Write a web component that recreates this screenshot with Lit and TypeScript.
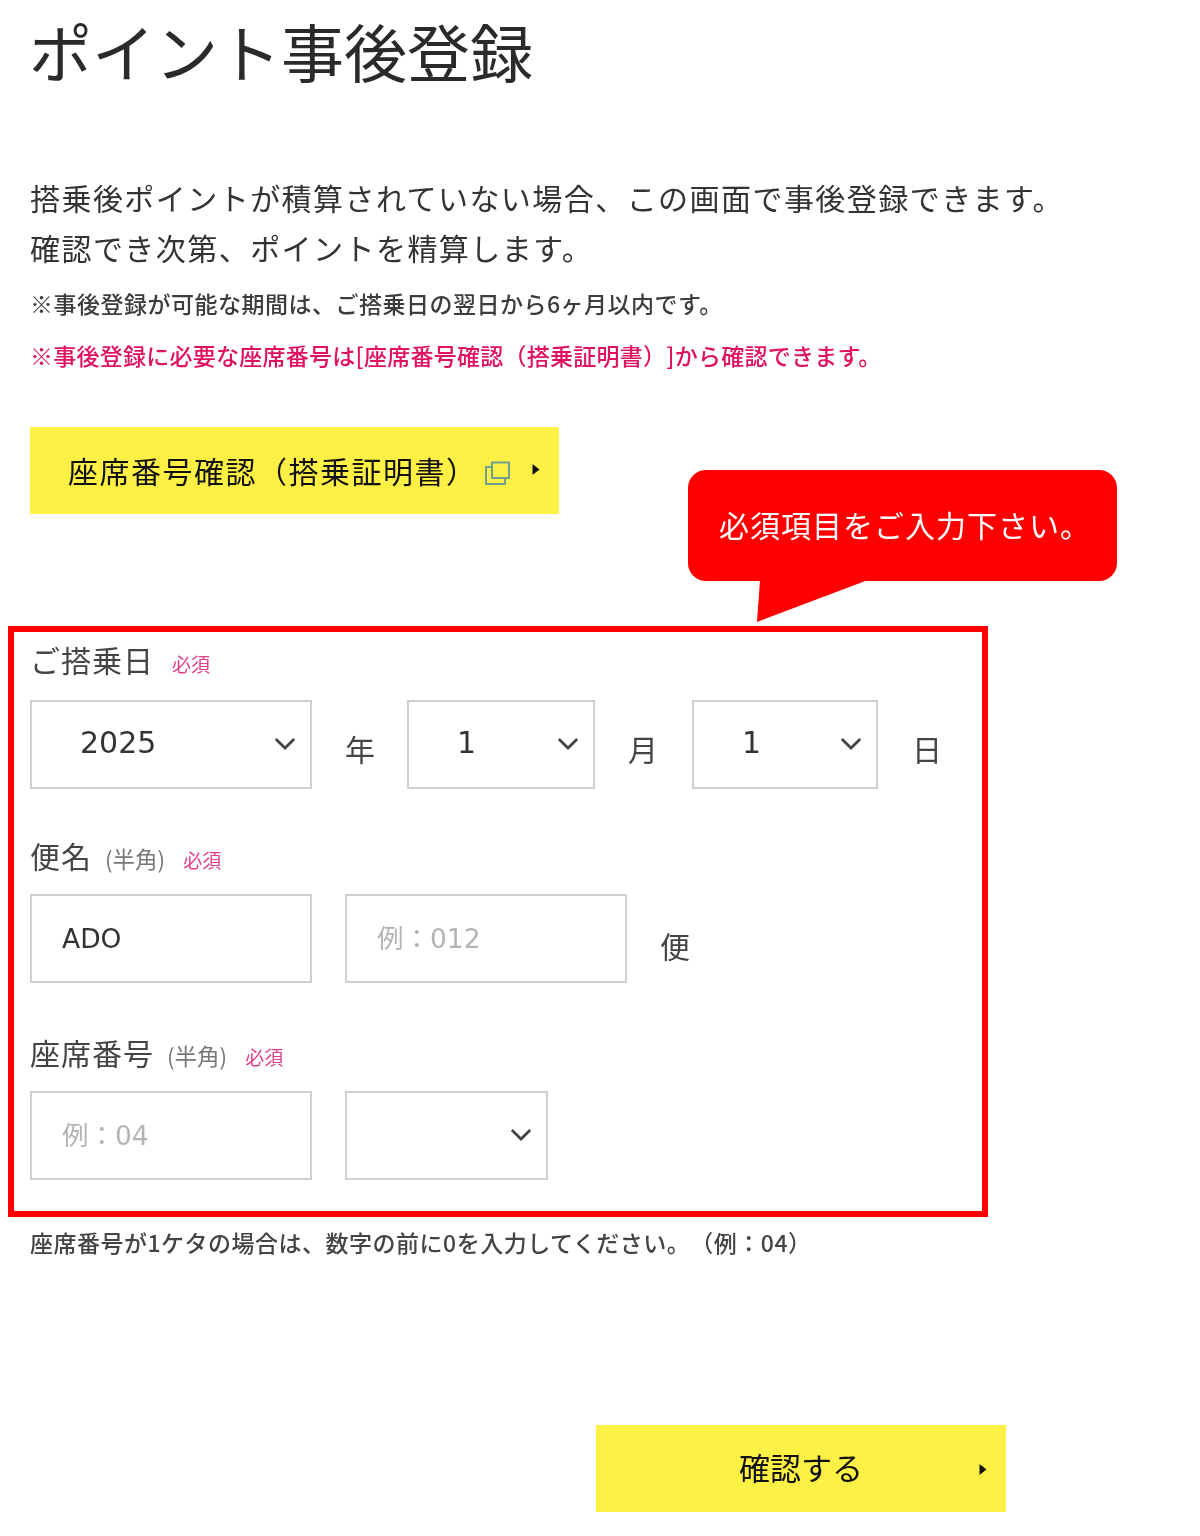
import { LitElement, html, css } from "lit";
import { customElement } from "lit/decorators.js";

const chevron = html`<svg class="chev" viewBox="0 0 24 14" aria-hidden="true"><path d="M2 2 L12 12 L22 2" fill="none" stroke="#444" stroke-width="3"/></svg>`;
const arrow = html`<svg class="arrow" viewBox="0 0 8 12" aria-hidden="true"><path d="M0.5 0.5 L7.5 6 L0.5 11.5 Z" fill="#111"/></svg>`;

@customElement("app-root")
export class AppRoot extends LitElement {
  static styles = css`
    :host {
      display: block;
      width: 1200px;
      height: 1536px;
      overflow: hidden;
      position: relative;
      background: #fff;
      color: #333;
      font-family: "Noto Sans CJK JP", "Liberation Sans", sans-serif;
      filter: blur(0.55px);
      box-sizing: border-box;
      padding-left: 30px;
      text-spacing-trim: space-all;
    }
    * { box-sizing: border-box; }
    h1 {
      margin: 0 0 0 -1px;
      padding: 0;
      height: 108px;
      font-size: 63px;
      line-height: 100px;
      font-weight: 400;
      color: #2a2a2a;
      white-space: nowrap;
    }
    .intro {
      margin: 64px 0 0;
      font-size: 30px;
      letter-spacing: 1.45px;
      line-height: 50px;
      white-space: nowrap;
      color: #333;
    }
    .note {
      margin: 0;
      font-size: 23px;
      font-weight: 500;
      letter-spacing: 0.5px;
      line-height: 52px;
      white-space: nowrap;
      color: #3c3c3c;
    }
    .first-note { margin-top: 5px; }
    .pink { color: #e0115f; letter-spacing: 0.25px; }
    .btn {
      display: flex;
      align-items: center;
      background: #fff045;
      color: #111;
      font-size: 30px;
      font-weight: 400;
      white-space: nowrap;
      position: relative;
    }
    .btn-label { padding-bottom: 2px; }
    .btn-seat {
      width: 529px;
      height: 87px;
      margin-top: 46px;
      padding-left: 38px;
      letter-spacing: 1.5px;
    }
    .copy { width: 27px; height: 26px; margin-left: 6px; margin-top: 4px; flex: none; }
    .arrow { width: 8px; height: 13px; flex: none; }
    .btn-seat .arrow { margin-left: 21px; margin-top: -3px; }
    .bubble {
      position: absolute;
      left: 688px;
      top: 470px;
      width: 429px;
      height: 111px;
      padding: 0 0 4px 31px;
      display: flex;
      align-items: center;
      background: #ff0000;
      border-radius: 18px;
      color: #fff;
      font-size: 30px;
      font-weight: 400;
      letter-spacing: 1px;
      white-space: nowrap;
    }
    .tail {
      position: absolute;
      left: 68px;
      top: 110px;
      width: 112px;
      height: 42px;
    }
    .form {
      width: 980px;
      height: 591px;
      margin: 112px 0 0 -22px;
      padding: 0 0 0 16px;
      border: 6px solid #ff0000;
      display: flex;
      flex-direction: column;
    }
    .label {
      display: flex;
      align-items: baseline;
      white-space: nowrap;
      font-size: 30px;
      letter-spacing: 1px;
      line-height: 44px;
      color: #444;
    }
    .sub { font-size: 22.5px; line-height: 1; letter-spacing: 0; color: #777; margin-left: 13px; }
    .req { font-size: 19px; line-height: 1; letter-spacing: 0; color: #e0408a; margin-left: 18px; }
    .row {
      display: flex;
      align-items: flex-start;
      height: 89px;
      margin-top: 17px;
    }
    .row-first { margin-top: 19px; }
    .field {
      position: relative;
      height: 89px;
      flex: none;
    }
    select, input {
      display: block;
      width: 100%;
      height: 100%;
      margin: 0;
      border: 2px solid #cfcfcf;
      border-radius: 0;
      background: #fff;
      color: #333;
      font-family: "DejaVu Sans", "Noto Sans CJK JP", sans-serif;
      outline: none;
      appearance: none;
      -webkit-appearance: none;
    }
    input { padding: 0 0 0 30px; font-size: 26.5px; }
    input::placeholder { color: #b4b4b4; opacity: 1; }
    select { padding: 0 0 4px 48px; font-size: 30px; }
    .chev {
      position: absolute;
      right: 16px;
      top: 37px;
      width: 22px;
      height: 13px;
      pointer-events: none;
    }
    .w282 { width: 282px; }
    .w188 { width: 188px; }
    .w186 { width: 186px; }
    .w203 { width: 203px; }
    .unit {
      font-size: 30px;
      line-height: 89px;
      color: #444;
      margin-top: 4px;
      flex: none;
      width: 30px;
    }
    .date-y { margin-left: 33px; margin-right: 32px; }
    .date-m { margin-left: 33px; margin-right: 34px; }
    .date-d { margin-left: 34px; }
    .gap { margin-left: 33px; }
    .unit.gap { margin-top: 7px; }
    .hint {
      margin: 3px 0 0;
      font-size: 23px;
      font-weight: 500;
      letter-spacing: 0.5px;
      line-height: 44px;
      color: #444;
      white-space: nowrap;
    }
    .lab1 { margin-top: 5px; }
    .lab2 { margin-top: 44px; }
    .lab3 { margin-top: 47px; }
    .btn-ok {
      width: 410px;
      height: 87px;
      margin: 161px 0 0 566px;
      justify-content: center;
      font-size: 31px;
    }
    .btn-ok .btn-label { padding-bottom: 5px; }
    .btn-ok .arrow { position: absolute; right: 19px; top: 38px; }
  `;

  render() {
    return html`
      <h1>ポイント事後登録</h1>
      <p class="intro">搭乗後ポイントが積算されていない場合、この画面で事後登録できます。<br />確認でき次第、ポイントを精算します。</p>
      <p class="note first-note">※事後登録が可能な期間は、ご搭乗日の翌日から6ヶ月以内です。</p>
      <p class="note pink">※事後登録に必要な座席番号は[座席番号確認（搭乗証明書）]から確認できます。</p>

      <div class="btn btn-seat">
        <span class="btn-label">座席番号確認（搭乗証明書）</span>
        <svg class="copy" viewBox="0 0 27 26" aria-hidden="true">
          <path d="M8 2.5 H25 V18 H8 Z" fill="none" stroke="#6f9f8f" stroke-width="2"/>
          <path d="M8 7 H2 V24 H21 V18" fill="none" stroke="#6f9f8f" stroke-width="2"/>
        </svg>
        ${arrow}
      </div>

      <div class="bubble">
        必須項目をご入力下さい。
        <svg class="tail" viewBox="0 0 112 42" aria-hidden="true"><path d="M4 0 L1 42 L112 0 Z" fill="#ff0000"/></svg>
      </div>

      <div class="form">
        <div class="label lab1">ご搭乗日<span class="req">必須</span></div>
        <div class="row row-first">
          <div class="field w282"><select><option>2025</option></select>${chevron}</div>
          <span class="unit date-y">年</span>
          <div class="field w188"><select><option>1</option></select>${chevron}</div>
          <span class="unit date-m">月</span>
          <div class="field w186"><select><option>1</option></select>${chevron}</div>
          <span class="unit date-d">日</span>
        </div>

        <div class="label lab2">便名<span class="sub">(半角)</span><span class="req">必須</span></div>
        <div class="row">
          <div class="field w282"><input value="ADO" /></div>
          <div class="field w282 gap"><input placeholder="例：012" /></div>
          <span class="unit gap">便</span>
        </div>

        <div class="label lab3">座席番号<span class="sub">(半角)</span><span class="req">必須</span></div>
        <div class="row">
          <div class="field w282"><input placeholder="例：04" /></div>
          <div class="field w203 gap"><select></select>${chevron}</div>
        </div>
      </div>

      <p class="hint">座席番号が1ケタの場合は、数字の前に0を入力してください。（例：04）</p>

      <div class="btn btn-ok"><span class="btn-label">確認する</span>${arrow}</div>
    `;
  }
}
